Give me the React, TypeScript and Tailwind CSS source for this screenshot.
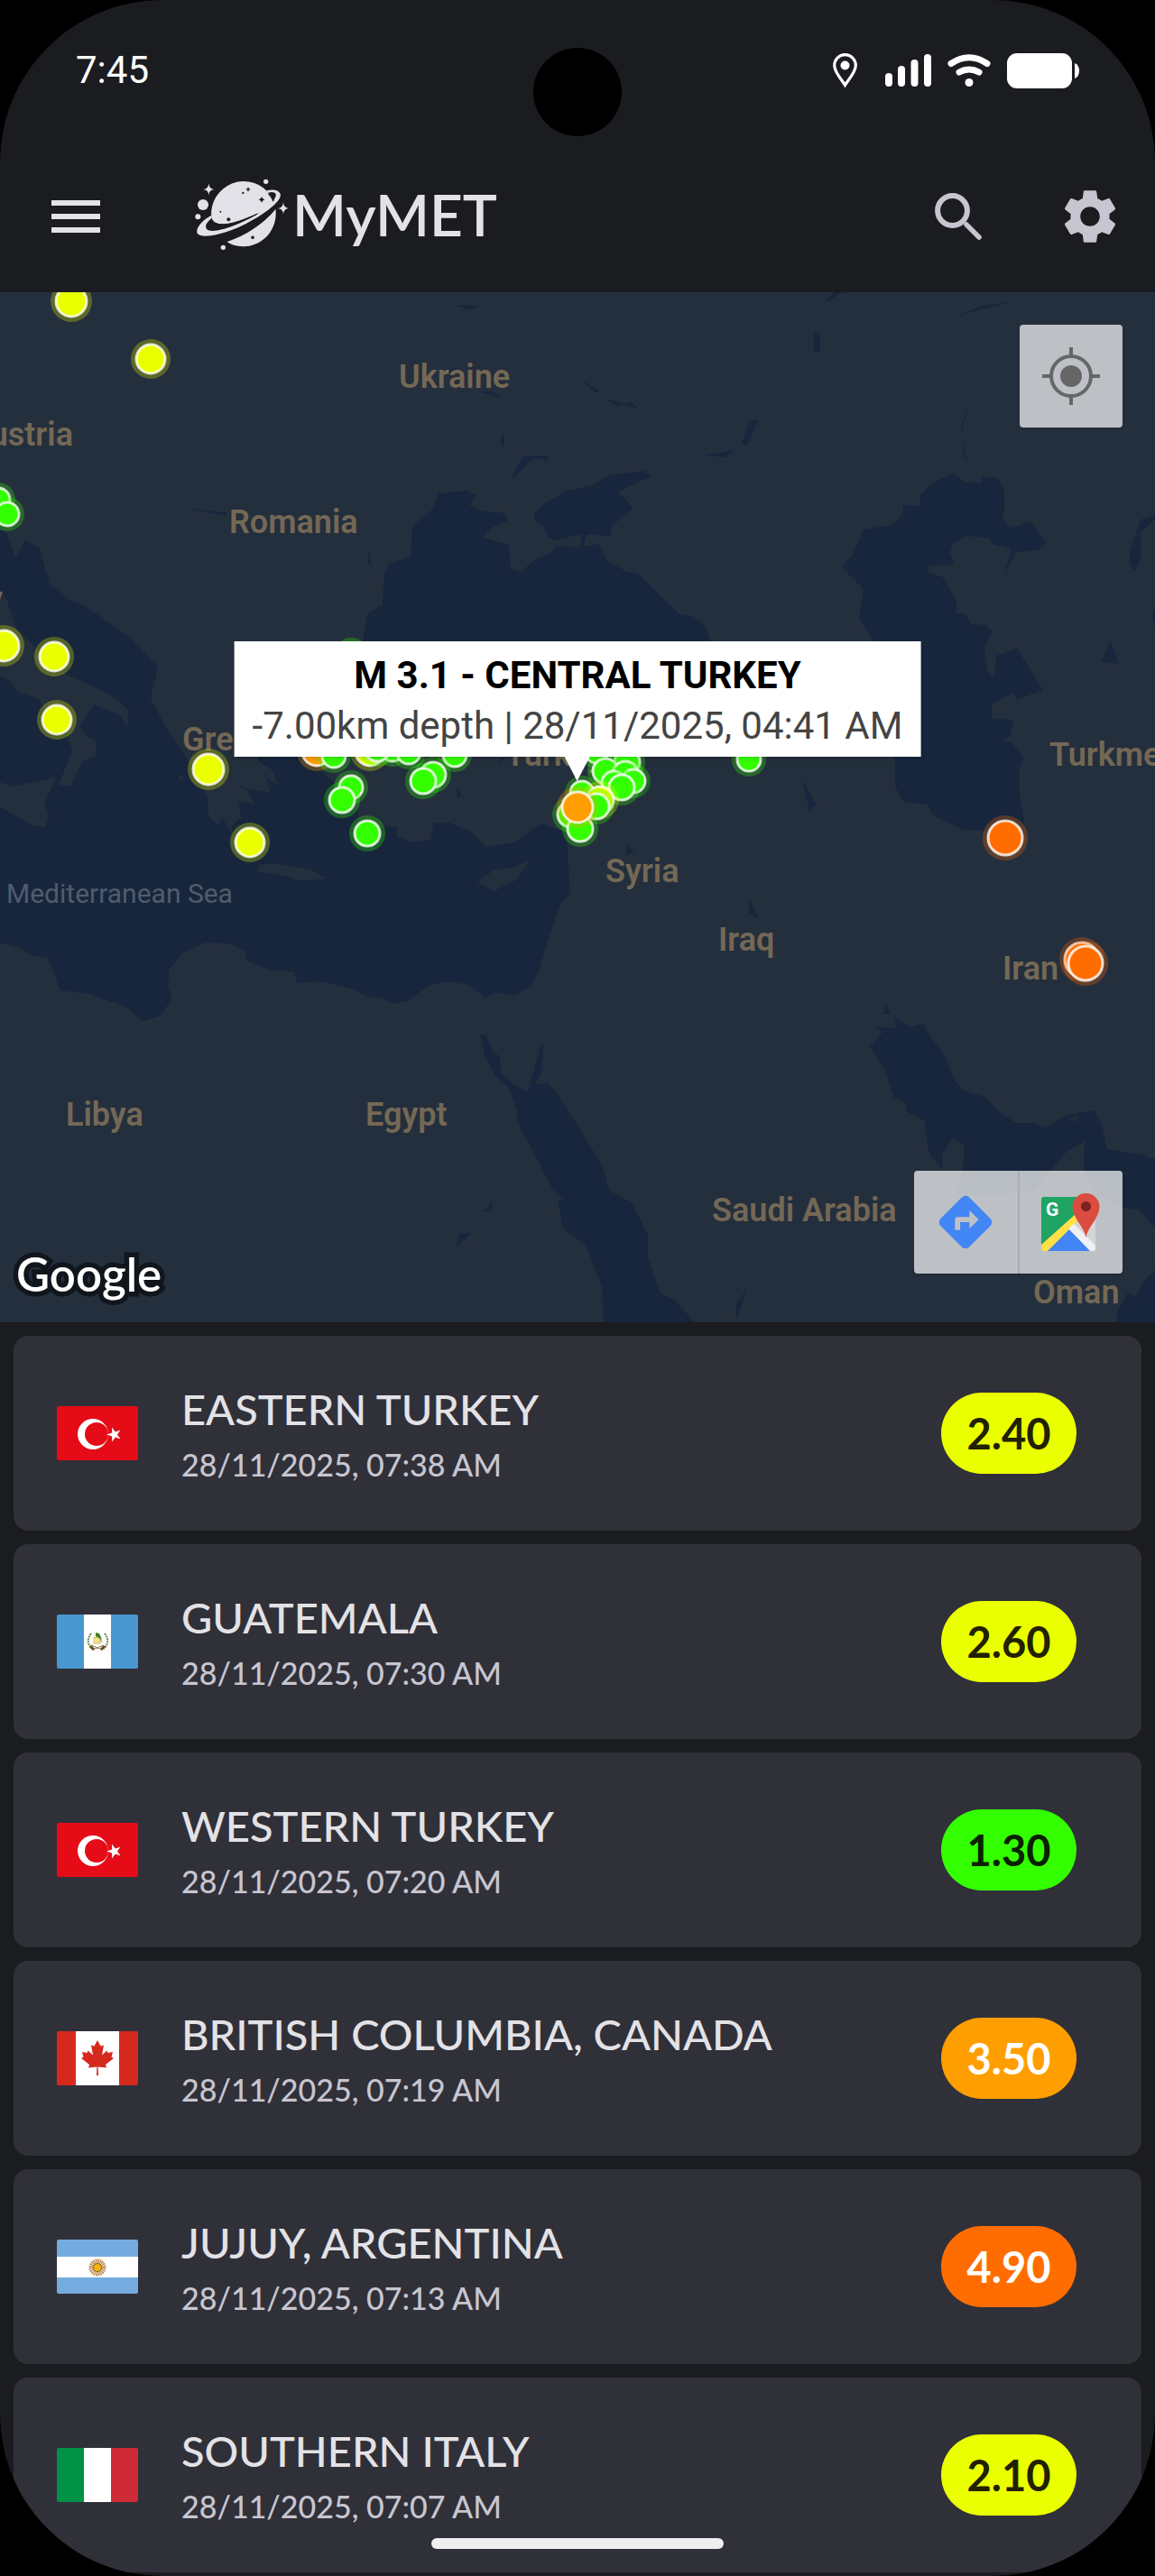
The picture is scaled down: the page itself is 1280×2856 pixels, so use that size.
import { MdDirections, MdMenu, MdSettings } from "react-icons/md";
import type { ReactNode } from "react";

type Marker = { x: number; y: number; r: number; color: string };
type Label = { x: number; y: number; name: string; anchor?: "start" | "middle" | "end" };
type Quake = { place: string; time: string; magnitude: string; flag: ReactNode; badge: string };

/* map data, in map units (1280 x 1142) */
const SEAS = [
    // Mediterranean, Adriatic and Aegean
    "M0 264 6 264 17 294 28 275 44 284 55 324 80 343 92 346 145 384 175 415 167 450 184 483 202 509 216 532 231 562 231 580 241 591 247 583 256 600 258 590 267 582 265 565 282 567 275 553 262 547 300 555 294 536 308 547 302 530 286 520 286 500 353 500 353 529 372 545 397 576 397 590 440 593 440 604 457 610 477 607 481 588 498 588 522 598 539 615 570 610 600 589 617 595 628 599 629 616 632 667 622 676 610 710 598 750 590 767 571 780 551 776 537 782 520 768 496 764 475 769 451 786 437 789 422 782 407 781 390 772 355 764 329 766 326 753 302 752 272 741 273 731 254 722 228 721 203 732 188 750 186 769 191 783 177 803 158 808 137 791 98 778 67 774 53 738 35 735 22 727 0 721Z",
    // Black Sea
    "M402 387 407 356 424 347 426 312 431 301 455 293 456 277 457 260 479 241 486 223 518 220 528 225 520 236 534 242 559 245 563 253 545 261 535 272 564 280 566 307 577 310 596 294 608 291 617 281 640 283 664 279 673 298 693 309 709 313 752 356 769 360 782 371 788 387 788 430 402 430Z",
    // Sea of Azov
    "M592 245 602 235 626 221 656 214 675 203 713 198 722 204 685 221 702 239 678 259 676 271 658 268 650 269 646 284 643 284 645 268 616 275 607 272 603 260 592 252Z",
    // Caspian Sea
    "M1057 200 1068 210 1087 212 1089 205 1105 206 1113 218 1113 243 1111 250 1119 262 1141 254 1160 278 1151 286 1126 288 1112 314 1121 285 1100 279 1097 273 1071 270 1056 278 1053 289 1058 302 1029 303 1029 310 1045 316 1060 342 1060 356 1069 356 1076 368 1093 369 1100 376 1091 394 1094 419 1101 428 1104 403 1127 395 1156 441 1126 452 1123 444 1099 456 1099 473 1124 474 1119 492 1109 497 1121 499 1134 516 1130 528 1130 559 1136 590 1110 596 1067 596 1034 580 1027 568 1001 565 992 548 991 450 968 387 952 361 957 329 933 305 946 289 957 263 988 258 1000 247 1001 236 1019 237 1020 224 1034 211Z",
    // Persian Gulf
    "M971 815 993 816 991 804 1009 815 1024 810 1027 820 1047 846 1056 871 1067 885 1092 892 1106 908 1126 921 1145 921 1158 927 1181 913 1211 907 1220 920 1227 950 1264 956 1280 961 1280 1037 1262 1017 1244 1015 1215 1000 1201 974 1202 941 1181 954 1164 974 1146 996 1110 1000 1060 1000 1067 975 1069 945 1056 938 1044 956 1045 973 1030 956 1024 918 1004 908 1004 899 990 892 981 863 964 837 978 820Z",
    "M1280 1085 1268 1096 1259 1114 1250 1109 1237 1132 1239 1142 1280 1142Z",
    // Red Sea
    "M532 823 539 824 545 840 554 848 555 865 569 878 585 887 599 836 602 834 600 865 594 877 607 877 618 889 640 924 668 969 675 996 700 1009 718 1045 718 1070 732 1110 747 1117 770 1142 669 1142 667 1103 650 1058 640 1050 624 1038 618 1007 624 1006 612 994 604 978 574 921 573 907 563 881 549 869 538 848Z",
    // Aral Sea
    "M1264 252 1280 247 1280 252 1264 266 1265 294 1258 309 1252 302 1252 287Z",
];

const LAKES = [
    "M566 208 579 182 606 181 609 187 592 184Z",
    "M553 164 559 157 559 172Z",
    "M532 110 547 110 556 118Z",
    "M504 14 532 15 520 20Z",
    "M498 87 504 84 510 88Z",
    "M210 240 251 244 251 248Z",
    "M408 283 412 306 408 300Z",
    "M911 14 924 0 933 0Z",
    "M1062 26 1089 15 1123 10 1100 16Z",
    "M902 46 909 44 909 67 902 67Z",
    "M644 97 664 109 660 112Z",
    "M671 118 689 123 699 122 709 130 692 125 683 126Z",
    "M822 168 830 143 840 142 828 170Z",
    "M782 181 815 174 804 183Z",
    "M1076 120 1066 144 1066 157 1068 143Z",
    "M1066 164 1073 189 1068 180Z",
    "M1231 387 1240 413 1220 409Z",
    "M1280 348 1277 360 1280 372Z",
    "M889 541 905 568 897 575Z",
    "M693 611 703 620 695 624Z",
    "M831 672 840 695 830 688Z",
    "M982 789 986 800 978 801Z",
    "M546 1007 545 1019 535 1019Z",
    "M509 1044 523 1043 506 1058Z",
    "M828 1105 815 1142 816 1121Z",
    "M506 549 512 558 507 561Z",
    "M722 540 718 553 710 560 712 548Z",
    "M560 516 553 524 556 516Z",
];

const LANDS = [
    "M0 330 7 340 18 373 41 396 76 425 110 440 129 451 143 464 141 482 133 469 104 457 88 481 95 492 106 497 106 515 91 520 78 548 65 546 80 509 73 486 41 450 21 444 10 430 0 425Z",
    "M0 543 12 548 62 538 49 568 55 580 50 593 35 591 12 577 0 570Z",
    "M286 635 304 633 345 640 360 650 330 652 316 647 286 643Z",
    "M529 654 548 640 567 638 587 630 573 651 547 664Z",
    "M201 534 204 541 197 539Z",
    "M1185 916 1197 913 1191 920Z",
];

const LABELS: Label[] = [
    { x: 442, y: 106, name: "Ukraine" },
    { x: 81, y: 170, name: "Austria", anchor: "end" },
    { x: 254, y: 267, name: "Romania" },
    { x: 3, y: 352, name: "Italy", anchor: "end" },
    { x: 202, y: 508, name: "Greece" },
    { x: 560, y: 525, name: "Turkey" },
    { x: 1163, y: 525, name: "Turkmenistan" },
    { x: 671, y: 654, name: "Syria" },
    { x: 796, y: 730, name: "Iraq" },
    { x: 1111, y: 762, name: "Iran" },
    { x: 73, y: 924, name: "Libya" },
    { x: 405, y: 924, name: "Egypt" },
    { x: 789, y: 1030, name: "Saudi Arabia" },
    { x: 1145, y: 1121, name: "Oman" },
];

const GREEN = "#33ff00";
const YELLOW = "#eaff00";
const AMBER = "#ff9e00";
const ORANGE = "#ff6d00";

const MARKERS: Marker[] = [
    { x: 79, y: 10, r: 17, color: YELLOW },
    { x: 167, y: 74, r: 16, color: YELLOW },
    { x: -2, y: 230, r: 13, color: GREEN },
    { x: 8, y: 246, r: 13, color: GREEN },
    { x: 4, y: 392, r: 17, color: YELLOW },
    { x: 60, y: 404, r: 16, color: YELLOW },
    { x: 63, y: 474, r: 16, color: YELLOW },
    { x: 231, y: 529, r: 17, color: YELLOW },
    { x: 277, y: 610, r: 16, color: YELLOW },
    { x: 389, y: 402, r: 13, color: GREEN },
    { x: 351, y: 509, r: 16, color: AMBER },
    { x: 370, y: 514, r: 13, color: GREEN },
    { x: 410, y: 509, r: 16, color: YELLOW },
    { x: 435, y: 507, r: 13, color: GREEN },
    { x: 418, y: 506, r: 14, color: GREEN },
    { x: 453, y: 510, r: 13, color: GREEN },
    { x: 504, y: 513, r: 13, color: GREEN },
    { x: 389, y: 549, r: 13, color: GREEN },
    { x: 379, y: 563, r: 14, color: GREEN },
    { x: 480, y: 535, r: 14, color: GREEN },
    { x: 469, y: 542, r: 14, color: GREEN },
    { x: 407, y: 600, r: 14, color: GREEN },
    { x: 661, y: 509, r: 13, color: GREEN },
    { x: 695, y: 521, r: 14, color: GREEN },
    { x: 671, y: 531, r: 14, color: GREEN },
    { x: 693, y: 534, r: 14, color: GREEN },
    { x: 702, y: 542, r: 13, color: GREEN },
    { x: 680, y: 544, r: 13, color: GREEN },
    { x: 689, y: 549, r: 14, color: GREEN },
    { x: 830, y: 518, r: 13, color: GREEN },
    { x: 645, y: 555, r: 13, color: GREEN },
    { x: 632, y: 579, r: 14, color: GREEN },
    { x: 665, y: 563, r: 15, color: YELLOW },
    { x: 661, y: 570, r: 14, color: GREEN },
    { x: 643, y: 595, r: 14, color: GREEN },
    { x: 640, y: 571, r: 17, color: AMBER },
    { x: 1114, y: 605, r: 19, color: ORANGE },
    { x: 1199, y: 740, r: 19, color: ORANGE },
    { x: 1203, y: 744, r: 19, color: ORANGE },
];

/* flags, all on a 90 x 60 box */
function Flag({ children }: { children: ReactNode }) {
    return (
        <svg viewBox="0 0 90 60" className="h-[60px] w-[90px] shrink-0 rounded-xs" aria-hidden="true">
            { children }
        </svg>
    );
}

function Turkey() {
    return (
        <Flag>
            <path fill="#e50b17" d="M0 0h90v60H0z" />
            <circle cx="40" cy="31" r="17" fill="#fff" />
            <circle cx="44" cy="31" r="13" fill="#e50b17" />
            <path fill="#fff" d="M55 31.500 61.200 29.400 61 23.500 64.800 28.400 70.500 26.500 67 31.500 70.500 36.500 64.800 34.600 61 39.500 61.200 33.600Z" />
        </Flag>
    );
}

function Guatemala() {
    return (
        <Flag>
            <path fill="#4997d0" d="M0 0h90v60H0z" />
            <path fill="#fff" d="M30 0h30v60H30z" />
            <path d="M38 21Q31 30 39 38M53 21Q60 30 52 38" fill="none" stroke="#5d8a45" strokeWidth="2" strokeDasharray="2 1" />
            <path fill="#f6e08c" stroke="#d9bd5f" d="M41 25h7v7h-7z" />
            <path fill="#448127" d="M43 20l4 1 2 4 1 7-2-5-5-3z" />
            <path d="M38 34l12 5M52 34l-12 5" stroke="#8c7a4c" strokeWidth="1" />
            <path d="M37 35l4 4M53 35l-4 4" stroke="#6b4a22" strokeWidth="3" />
        </Flag>
    );
}

function Canada() {
    return (
        <Flag>
            <path fill="#d6291e" d="M0 0h90v60H0z" />
            <path fill="#fff" d="M21 0h48v60H21z" />
            <path
                fill="#d6291e"
                d="M45 10 41.500 16.500 38 15.500 40 26.500 34.500 21.500 33.500 24 28 23 29.500 28.500 27 30 36 37 35 40.500 44.400 39.500 44 49H46L45.600 39.500 55 40.500 54 37 63 30 60.500 28.500 62 23 56.500 24 55.500 21.500 50 26.500 52 15.500 48.500 16.500Z"
            />
        </Flag>
    );
}

function Argentina() {
    return (
        <Flag>
            <path fill="#74acdf" d="M0 0h90v60H0z" />
            <path fill="#fff" d="M0 19h90v23H0z" />
            <circle cx="45" cy="31" r="7" fill="none" stroke="#c08c54" strokeWidth="5" strokeDasharray="1.500 .7" />
            <circle cx="45" cy="31" r="4.500" fill="#f6b40e" stroke="#85600f" strokeWidth="1" />
        </Flag>
    );
}

function Italy() {
    return (
        <Flag>
            <path fill="#009246" d="M0 0h30v60H0z" />
            <path fill="#fff" d="M30 0h30v60H30z" />
            <path fill="#ce2b37" d="M60 0h30v60H60z" />
        </Flag>
    );
}

const QUAKES: Quake[] = [
    { place: "EASTERN TURKEY", time: "28/11/2025, 07:38 AM", magnitude: "2.40", flag: <Turkey />, badge: "bg-[#eaff00] text-[#212100]" },
    { place: "GUATEMALA", time: "28/11/2025, 07:30 AM", magnitude: "2.60", flag: <Guatemala />, badge: "bg-[#eaff00] text-[#212100]" },
    { place: "WESTERN TURKEY", time: "28/11/2025, 07:20 AM", magnitude: "1.30", flag: <Turkey />, badge: "bg-[#33ff00] text-[#0a2100]" },
    { place: "BRITISH COLUMBIA, CANADA", time: "28/11/2025, 07:19 AM", magnitude: "3.50", flag: <Canada />, badge: "bg-[#ff9e00] text-white" },
    { place: "JUJUY, ARGENTINA", time: "28/11/2025, 07:13 AM", magnitude: "4.90", flag: <Argentina />, badge: "bg-[#ff6d00] text-white" },
    { place: "SOUTHERN ITALY", time: "28/11/2025, 07:07 AM", magnitude: "2.10", flag: <Italy />, badge: "bg-[#eaff00] text-[#212100]" },
];

function StatusBar() {
    return (
        <div className="relative flex h-[156px] items-center justify-between px-[84px] text-white">
            <span className="font-[Roboto,sans-serif] text-[42px] leading-none">7:45</span>

            {/* camera hole */ }
            <span className="absolute top-[53px] left-1/2 size-[98px] -translate-x-1/2 rounded-full bg-black" />

            <div className="flex items-center">
                <svg viewBox="0 0 27 38" className="mr-[31px] h-[38px] w-[27px]" aria-hidden="true">
                    <path d="M13.500 1.700C7 1.700 1.700 6.800 1.700 13.500 1.700 21 9 28 13.500 35.500 18 28 25.300 21 25.300 13.500 25.300 6.800 20 1.700 13.500 1.700Z" fill="none" stroke="currentColor" strokeWidth="3.200" />
                    <circle cx="13.500" cy="13.500" r="5" fill="currentColor" />
                </svg>
                <svg viewBox="0 0 51 36" className="mr-[18px] h-9 w-[51px]" fill="currentColor" aria-hidden="true">
                    <rect x="0" y="21" width="8" height="15" rx="4" />
                    <rect x="14" y="13" width="8" height="23" rx="4" />
                    <rect x="28.500" y="6" width="8" height="30" rx="4" />
                    <rect x="43" y="0" width="8" height="36" rx="4" />
                </svg>
                <svg viewBox="0 0 48 36" className="mr-[18px] h-9 w-12" aria-hidden="true">
                    <path d="M4 10.500Q24-3 44 10.500" fill="none" stroke="currentColor" strokeWidth="7" strokeLinecap="round" />
                    <path d="M13 20Q24 14 35 20" fill="none" stroke="currentColor" strokeWidth="7" strokeLinecap="round" />
                    <circle cx="24" cy="31.500" r="4.500" fill="currentColor" />
                </svg>
                <svg viewBox="0 0 80 39" className="h-[39px] w-20" fill="currentColor" aria-hidden="true">
                    <rect width="72" height="39" rx="11" />
                    <path d="M75 11Q80 13 80 19.500T75 28Z" />
                </svg>
            </div>
        </div>
    );
}

function PlanetLogo() {
    return (
        <svg viewBox="50 55 312 240" className="h-20 w-[104px]" aria-hidden="true">
            <g fill="#e4e2e9">
                <path d="M105 184A108 108 0 0 1 302 112C308 126 312 138 304 146C284 160 262 170 258 172C215 190 170 212 136 208Q110 203 105 184Z" />
                <path d="M104 178C68 196 50 226 59 239C76 256 150 241 220 205C290 168 340 128 334 106C328 92 308 90 288 95L294 102C308 98 322 101 319 113C312 135 290 152 258 172C210 204 112 242 90 224C80 212 92 198 106 186Z" />
                <path d="M318 156C326 210 290 276 215 281Q180 282 157 265C220 245 285 200 318 156Z" />
                <path d="M96 71Q97 90 115 91 97 92 96 111 95 92 77 91 95 90 96 71ZM344 134Q345 153 363 154 345 155 344 174 343 155 325 154 343 153 344 134Z" />
                <circle cx="286" cy="65" r="8" />
                <circle cx="77" cy="142" r="18" />
                <circle cx="60" cy="182" r="9" />
                <circle cx="144" cy="284" r="8" />
            </g>
            <path d="M258 172C215 197 160 218 118 204 150 216 205 196 258 172Z" fill="#1b1c20" stroke="#1b1c20" strokeWidth="3" />
            <path d="M294 105Q308 120 311 130" fill="none" stroke="#1b1c20" strokeWidth="4" />
            <g fill="#1b1c20">
                <path d="M227 83Q228 90 235 91 228 92 227 99 226 92 219 91 226 90 227 83ZM272 115Q274 123 282 125 274 127 272 135 270 127 262 125 270 123 272 115Z" />
                <circle cx="210" cy="103" r="3.500" />
                <circle cx="135" cy="165" r="3" />
                <circle cx="162" cy="191" r="6" />
                <circle cx="242" cy="251" r="5.500" />
            </g>
        </svg>
    );
}

function Header() {
    return (
        <header className="flex h-[168px] items-center pr-9 pl-12">
            <button type="button" aria-label="Menu" className="text-[#e3e2e6]">
                <MdMenu className="size-[72px]" />
            </button>
            <div className="ml-24 flex flex-1 items-center gap-1 pb-1">
                <PlanetLogo />
                <h1 className="font-[Lato,sans-serif] text-[64px] leading-none font-semibold text-[#e4e2e9]">MyMET</h1>
            </div>
            <div className="flex items-center gap-19 text-[#c7c6d0]">
                <button type="button" aria-label="Search" className="p-2">
                    <svg viewBox="0 0 52 52" className="size-[52px]" fill="none" stroke="currentColor" aria-hidden="true">
                        <circle cx="19.500" cy="19.500" r="16.400" strokeWidth="6" />
                        <path d="M35 35 49 49" strokeWidth="5.500" strokeLinecap="round" />
                    </svg>
                </button>
                <button type="button" aria-label="Settings">
                    <MdSettings className="size-[72px]" />
                </button>
            </div>
        </header>
    );
}

function MapsIcon() {
    return (
        <svg viewBox="0 0 66 66" className="size-[66px]" aria-hidden="true">
            <path fill="#d5d5d5" d="M36 36 60 14V62L56 65Z" />
            <path fill="#1fa463" d="M3 5H42V24L0 62V8Q0 5 3 5Z" />
            <path fill="#4285f4" d="M6 65 30 40 55 65Z" />
            <path fill="#ffe047" d="M0 58 38 24 40 32 7 65H3Q0 65 0 62Z" />
            <path fill="#f1f1f3" d="M30 40 36 35 60 59V62Q60 65 57 65H54Z" />
            <text x="5" y="26" fill="#fff" fontFamily="Roboto, sans-serif" fontSize="21" fontWeight="700">G</text>
            <path fill="#db4b3f" d="M49.500 50C48 39 34.500 28 34.500 16A15 15 0 0 1 64.500 16C64.500 28 51 39 49.500 50Z" />
            <circle cx="49.500" cy="15.500" r="5.500" fill="#7b231e" />
        </svg>
    );
}

function QuakeMap() {
    return (
        <section aria-label="Earthquake map" className="relative overflow-hidden bg-[#242f3d]">
            <svg viewBox="0 0 1280 1142" className="block h-auto w-full">
                <path d={ SEAS.join("") } fill="#17263c" />
                <path d={ LANDS.join("") } fill="#242f3d" />
                <path d={ LAKES.join("") } fill="#17263c" />

                <g fontFamily="Roboto, sans-serif" fontSize="36" fontWeight="600" fill="#746855">
                    { LABELS.map((l) => (
                        <text key={ l.name } x={ l.x } y={ l.y } textAnchor={ l.anchor ?? "start" }>{ l.name }</text>
                    )) }
                </g>
                <text x="7" y="677" fontFamily="Roboto, sans-serif" fontSize="30" fill="#515c6d">Mediterranean Sea</text>

                { MARKERS.map((m) => (
                    <g key={ `${m.x}-${m.y}` } fill={ m.color }>
                        <circle cx={ m.x } cy={ m.y } r={ m.r + 6 } opacity="0.28" />
                        <circle cx={ m.x } cy={ m.y } r={ m.r } stroke="#fff" strokeOpacity="0.8" strokeWidth="3" />
                    </g>
                )) }

                <text
                    x="18"
                    y="1108"
                    fontFamily="Lato, sans-serif"
                    fontSize="51"
                    fontWeight="600"
                    fill="#fff"
                    stroke="#10161c"
                    strokeWidth="11"
                    paintOrder="stroke"
                >
                    Google
                </text>
            </svg>

            {/* info window */ }
            <div className="absolute bottom-[600px] left-1/2 flex -translate-x-1/2 flex-col items-center font-[Roboto,sans-serif] whitespace-nowrap">
                <div className="bg-white px-5 pt-2.5 pb-1.5 text-center text-[42px] leading-[56px] shadow-md">
                    <p className="font-bold text-black">M 3.1 - CENTRAL TURKEY</p>
                    <p className="text-[#444]">-7.00km depth | 28/11/2025, 04:41 AM</p>
                </div>
                <svg viewBox="0 0 28 27" className="h-[27px] w-7" aria-hidden="true">
                    <path d="M0 0H28L14 27Z" fill="#fff" />
                </svg>
            </div>

            <button type="button" aria-label="My location" className="absolute top-9 right-9 flex size-[114px] items-center justify-center rounded-sm bg-white/70 shadow-sm">
                <svg viewBox="0 0 64 64" className="size-16" aria-hidden="true">
                    <circle cx="32" cy="32" r="22" fill="none" stroke="#666" strokeWidth="4" />
                    <circle cx="32" cy="32" r="12" fill="#666" />
                    <path d="M32 0V9M32 55V64M0 32H9M55 32H64" stroke="#666" strokeWidth="4" />
                </svg>
            </button>

            <div className="absolute right-9 bottom-[54px] flex h-[114px] w-[231px] divide-x-2 divide-[#a9adb2] rounded-sm bg-white/70 shadow-sm">
                <button type="button" aria-label="Directions" className="flex flex-1 items-center justify-center text-[#4285f4]">
                    <MdDirections className="size-[70px]" />
                </button>
                <button type="button" aria-label="Open in Google Maps" className="flex flex-1 items-center justify-center">
                    <MapsIcon />
                </button>
            </div>
        </section>
    );
}

function QuakeCard({ quake }: { quake: Quake }) {
    return (
        <li className="flex h-[216px] items-center rounded-2xl bg-[#303039] pr-[72px] pl-12">
            { quake.flag }
            <div className="ml-12 flex flex-1 flex-col gap-2.5">
                <h2 className="text-[47px] leading-[60px] font-medium text-[#e3e2e6]">{ quake.place }</h2>
                <p className="text-[34px] leading-[44px] font-medium text-[#c7c6d0]">{ quake.time }</p>
            </div>
            <span className={ `flex h-[90px] w-[150px] items-center justify-center rounded-full text-[47px] font-bold ${quake.badge}` }>
                { quake.magnitude }
            </span>
        </li>
    );
}

export default function App() {
    return (
        <div className="min-h-screen bg-black">
            <main className="relative overflow-hidden rounded-[180px] bg-[#1b1c20] pb-1 font-[Lato,sans-serif]">
                <StatusBar />
                <Header />
                <QuakeMap />
                <ul className="flex flex-col gap-[15px] px-[15px] pt-[15px]">
                    { QUAKES.map((quake) => (
                        <QuakeCard key={ quake.time } quake={ quake } />
                    )) }
                </ul>

                {/* gesture bar */ }
                <span className="absolute bottom-[30px] left-1/2 h-3 w-[324px] -translate-x-1/2 rounded-full bg-[#efefef]" />
            </main>
        </div>
    );
}
